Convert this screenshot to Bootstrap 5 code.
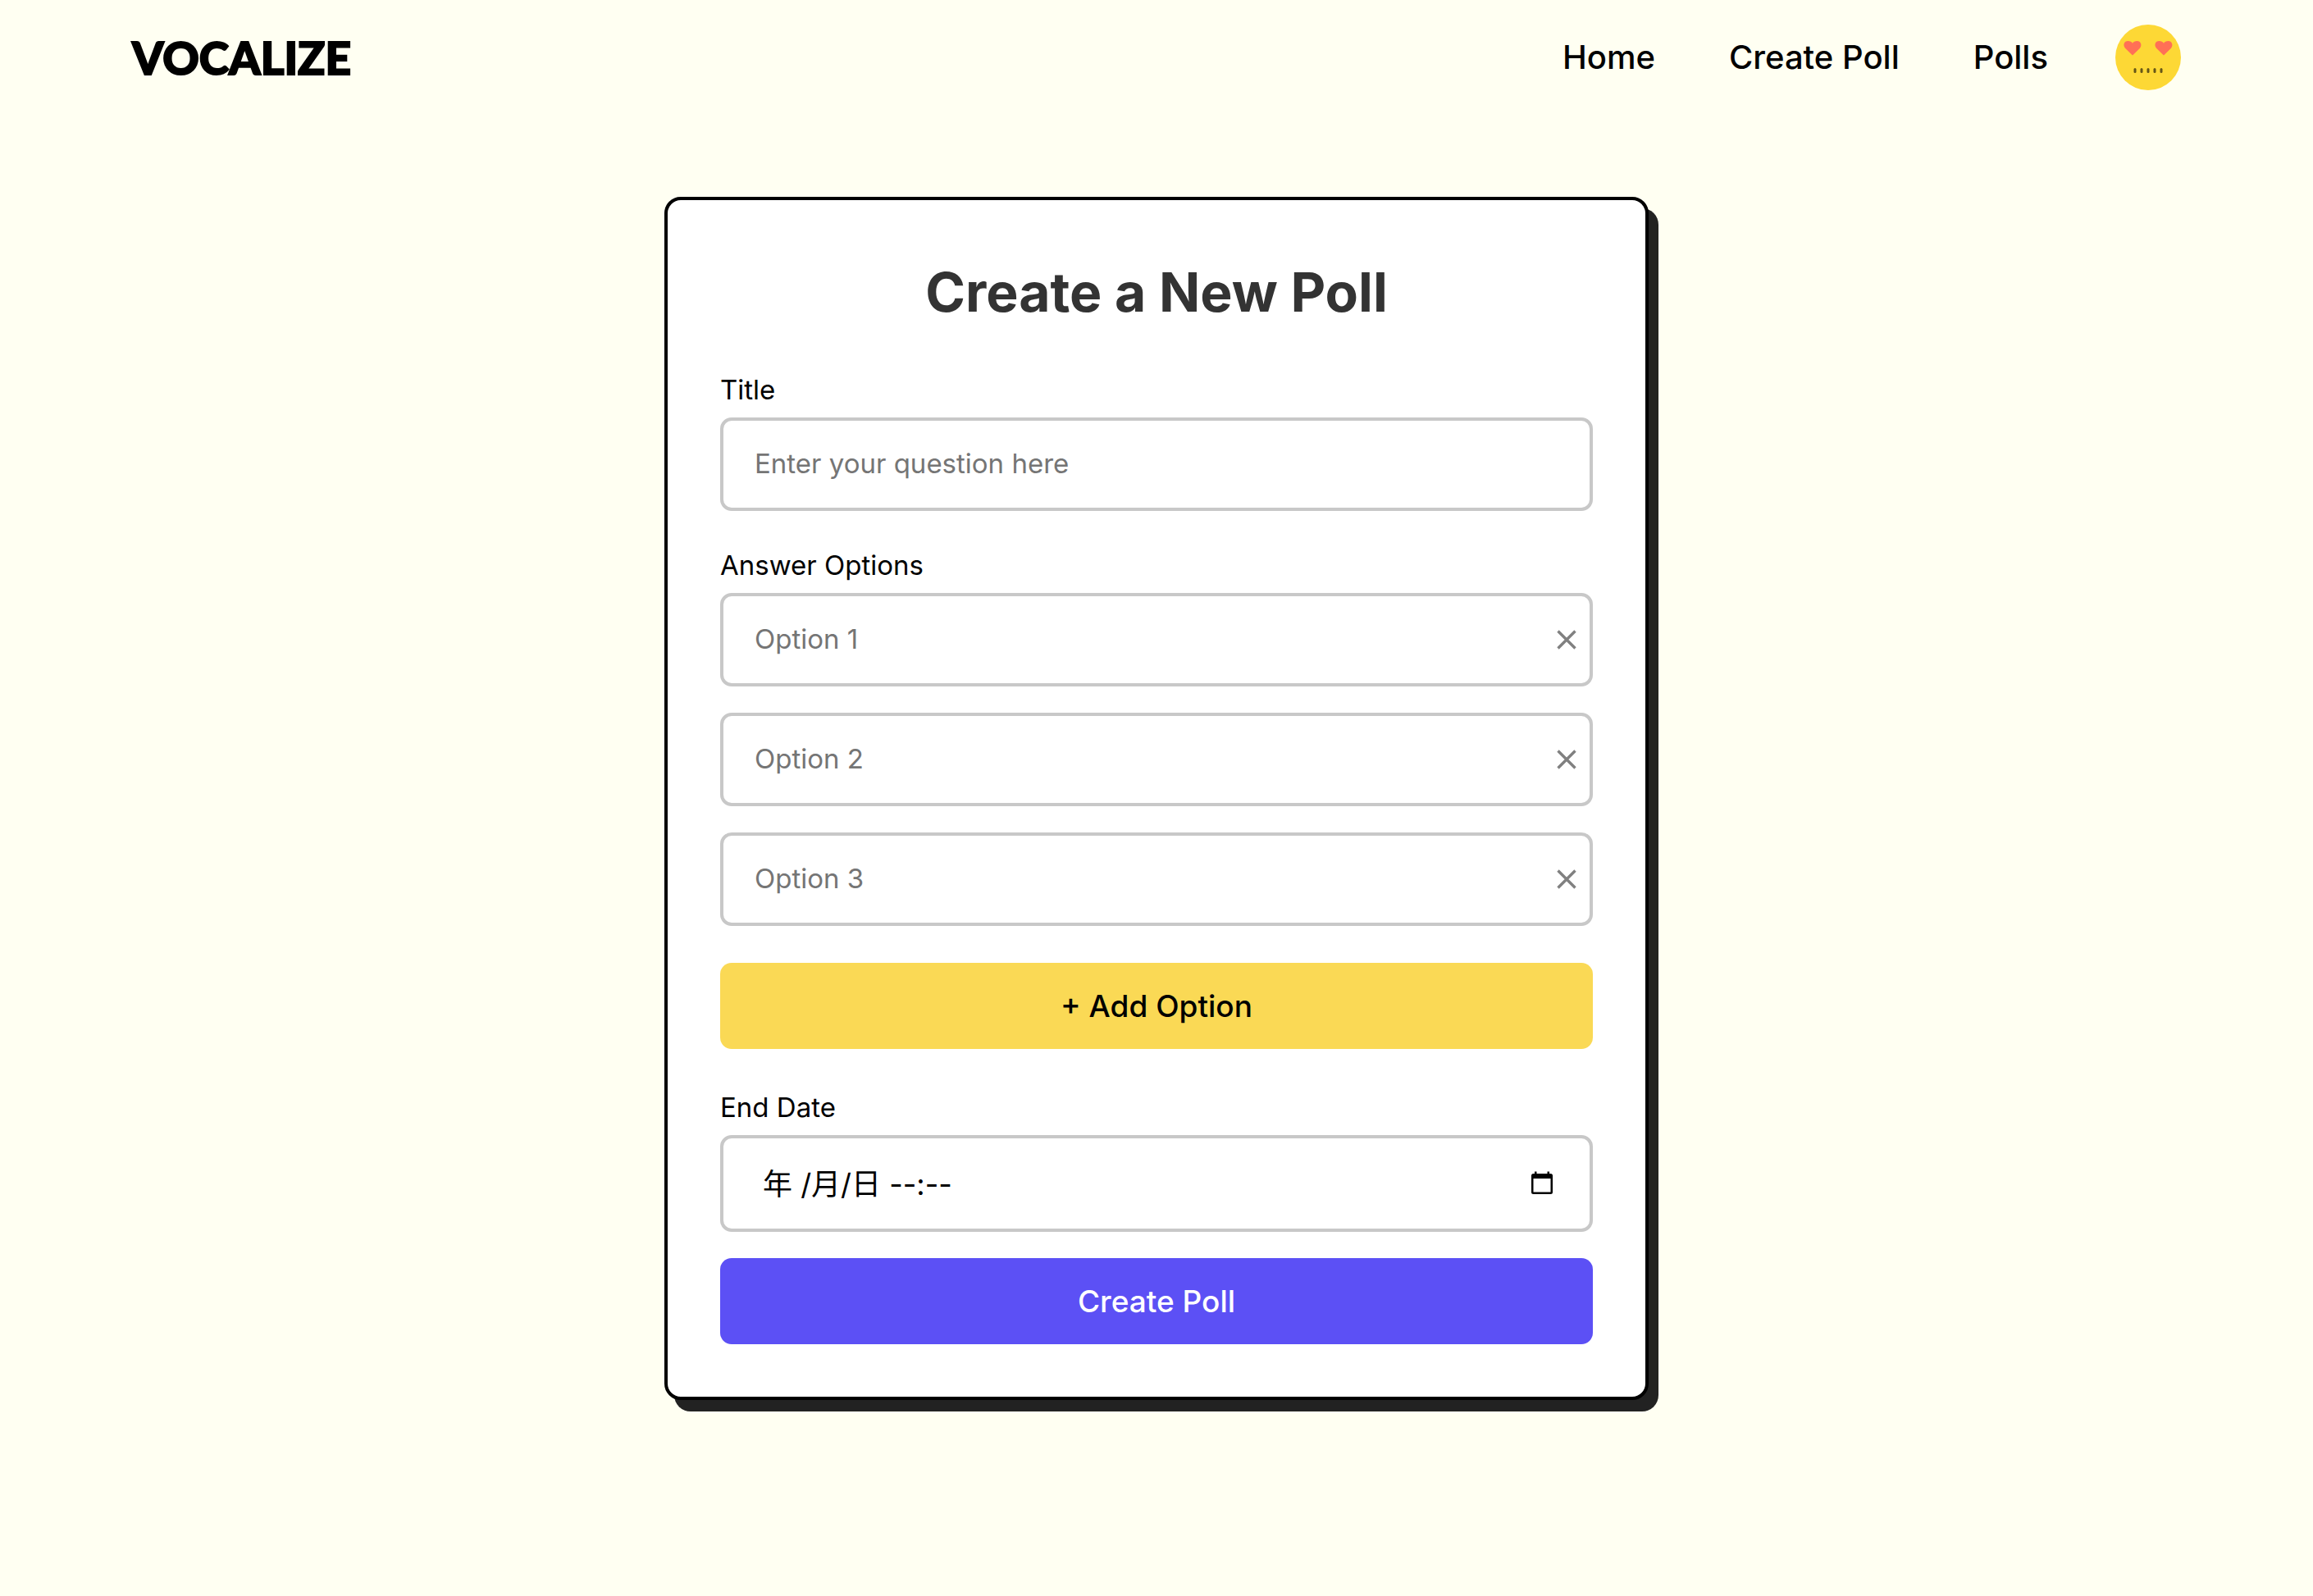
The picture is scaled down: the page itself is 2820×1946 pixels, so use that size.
<!DOCTYPE html>
<html lang="en">
<head>
<meta charset="utf-8">
<meta name="viewport" content="width=device-width, initial-scale=1">
<title>Vocalize – Create a New Poll</title>
<link href="https://cdn.jsdelivr.net/npm/bootstrap@5.3.0/dist/css/bootstrap.min.css" rel="stylesheet">
<style>
  body { background: #fffff2; color: #000; font-family: Inter, "Noto Sans CJK SC", sans-serif; font-size: 33px; line-height: 48px; }
  .site-nav { min-height: 140px; padding: 0 161px; }
  .site-nav .navbar-brand { font-family: Lato, sans-serif; font-weight: 900; font-size: 55px; line-height: 68px; color: #000; -webkit-text-stroke: 2px #000; }
  .site-links { gap: 90px; }
  .site-links .nav-link { font-size: 40px; font-weight: 500; color: #000; }
  .avatar-btn { width: 80px; height: 80px; margin-left: -8px; }
  .poll-main { padding: 100px 32px; }
  .poll-card { max-width: 1200px; border: 4px solid #000; border-radius: 20px; box-shadow: 12px 14px 0 #222; --bs-card-bg: #fff; }
  .poll-card .card-body { padding: 64px; }
  .poll-title { font-size: 66px; line-height: 96px; font-weight: 700; color: #333; margin-bottom: 47px; }
  .form-label { margin-bottom: 10px; }
  .field-group { margin-bottom: 42px; }
  .form-control, .form-control:focus { height: 114px; padding: 0 38px 2px; border: 4px solid #c8c8c8; border-radius: 14px; font-size: 33px; line-height: 48px; color: #000; background: #fff; }
  .form-control::placeholder { color: #757575; opacity: 1; }
  .option-list { gap: 32px; margin-bottom: 45px; }
  .date-field .form-control { height: 118px; padding: 0 48px 4px; font-size: 36px; }
  .field-icon { line-height: 0; }
  .remove-btn { margin-right: 20px; }
  .calendar-btn { margin-right: 45px; }
  .action-btn { height: 105px; border: 0; border-radius: 14px; font-size: 37px; font-weight: 500; }
  .add-btn, .add-btn:hover { background: #fad955; color: #000; margin-bottom: 47px; }
  .create-btn, .create-btn:hover { background: #5c50f5; color: #fff; margin-top: 32px; }
</style>
</head>
<body>
<nav class="navbar site-nav d-flex flex-nowrap justify-content-between align-items-center">
  <a class="navbar-brand p-0 m-0" href="#">VOCALIZE</a>
  <div class="site-links d-flex align-items-center">
    <a class="nav-link" href="#">Home</a>
    <a class="nav-link" href="#">Create Poll</a>
    <a class="nav-link" href="#">Polls</a>
    <button class="avatar-btn btn p-0 border-0 rounded-circle d-flex" type="button" aria-label="Account">
      <svg width="80" height="80" viewBox="0 0 80 80" aria-hidden="true">
        <circle cx="40" cy="40" r="40" fill="#fdd835"/>
        <g fill="#ff7056">
          <path id="heart" d="M21 37.500L12 28.800C9 25 10.500 20 15.500 20C18 20 20 21 21 22.800C22 21 24 20 26.500 20C31 20 33 25 30 28.800Z"/>
          <use href="#heart" x="38"/>
        </g>
        <g fill="#665616">
          <rect x="22.500" y="53" width="3" height="6" rx="1.500"/>
          <rect x="30.500" y="53" width="3" height="6" rx="1.500"/>
          <rect x="38.500" y="53" width="3" height="6" rx="1.500"/>
          <rect x="46.500" y="53" width="3" height="6" rx="1.500"/>
          <rect x="54.500" y="53" width="3" height="6" rx="1.500"/>
        </g>
      </svg>
    </button>
  </div>
</nav>

<main class="poll-main">
  <div class="card poll-card mx-auto">
    <form class="card-body">
      <h1 class="poll-title text-center">Create a New Poll</h1>

      <div class="field-group">
        <label class="form-label d-block" for="title">Title</label>
        <input class="form-control" id="title" type="text" placeholder="Enter your question here">
      </div>

      <label class="form-label d-block" for="option1">Answer Options</label>
      <div class="option-list d-flex flex-column">
        <div class="position-relative">
          <input class="form-control" id="option1" type="text" placeholder="Option 1">
          <button class="field-icon remove-btn btn p-0 border-0 position-absolute top-50 end-0 translate-middle-y" type="button" aria-label="Remove option 1">
            <svg width="24" height="24" viewBox="0 0 24 24" stroke="#808080" stroke-width="3.400" aria-hidden="true"><path d="M1.500 1.500L22.500 22.500M22.500 1.500L1.500 22.500"/></svg>
          </button>
        </div>
        <div class="position-relative">
          <input class="form-control" id="option2" type="text" placeholder="Option 2" aria-label="Option 2">
          <button class="field-icon remove-btn btn p-0 border-0 position-absolute top-50 end-0 translate-middle-y" type="button" aria-label="Remove option 2">
            <svg width="24" height="24" viewBox="0 0 24 24" stroke="#808080" stroke-width="3.400" aria-hidden="true"><path d="M1.500 1.500L22.500 22.500M22.500 1.500L1.500 22.500"/></svg>
          </button>
        </div>
        <div class="position-relative">
          <input class="form-control" id="option3" type="text" placeholder="Option 3" aria-label="Option 3">
          <button class="field-icon remove-btn btn p-0 border-0 position-absolute top-50 end-0 translate-middle-y" type="button" aria-label="Remove option 3">
            <svg width="24" height="24" viewBox="0 0 24 24" stroke="#808080" stroke-width="3.400" aria-hidden="true"><path d="M1.500 1.500L22.500 22.500M22.500 1.500L1.500 22.500"/></svg>
          </button>
        </div>
      </div>

      <button class="btn action-btn add-btn w-100" type="button">+ Add Option</button>

      <label class="form-label d-block" for="endDate">End Date</label>
      <div class="date-field position-relative">
        <input class="form-control" id="endDate" type="text" value="年 /月/日 --:--">
        <button class="field-icon calendar-btn btn p-0 border-0 position-absolute top-50 end-0 translate-middle-y" type="button" aria-label="Pick a date">
          <svg width="34" height="34" viewBox="0 0 34 34" aria-hidden="true">
            <path fill="#000" d="M8 2.500H10.500V6H8ZM23.500 2.500H26V6H23.500Z"/>
            <path fill="#000" fill-rule="evenodd" d="M6.500 5H27.500Q30 5 30 7.500V27.500Q30 30 27.500 30H6.500Q4 30 4 27.500V7.500Q4 5 6.500 5ZM6.500 11V27.500H27.500V11Z"/>
          </svg>
        </button>
      </div>

      <button class="btn action-btn create-btn w-100" type="submit">Create Poll</button>
    </form>
  </div>
</main>
<script src="https://cdn.jsdelivr.net/npm/bootstrap@5.3.0/dist/js/bootstrap.bundle.min.js"></script>
</body>
</html>
